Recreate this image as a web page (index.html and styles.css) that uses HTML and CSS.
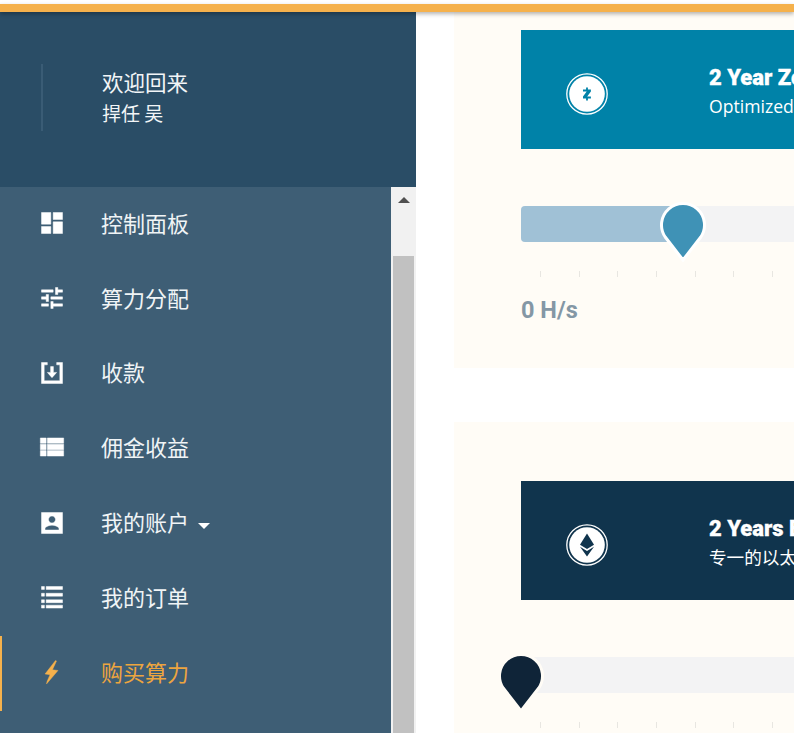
FILE: index.html
```html
<!DOCTYPE html>
<html lang="zh-CN">
<head>
    <meta charset="UTF-8">
    <title>购买算力</title>
    <link rel="stylesheet" href="styles.css">
</head>
<body>
    <div class="top-bar"></div>
    <div class="page">
        <aside class="sidebar">
            <div class="user-box">
                <div class="user-text">
                    <div class="welcome">欢迎回来</div>
                    <div class="user-name">捍任 吴</div>
                </div>
            </div>
            <div class="menu-wrap">
                <nav class="menu">
                    <a class="menu-item">
                        <svg class="icon" viewBox="0 0 24 24"><path d="M3 13h8V3H3v10zm0 8h8v-6H3v6zm10 0h8V11h-8v10zm0-18v6h8V3h-8z"/></svg>
                        <span>控制面板</span>
                    </a>
                    <a class="menu-item">
                        <svg class="icon" viewBox="0 0 24 24"><path d="M3 17v2h6v-2H3zM3 5v2h10V5H3zm10 16v-2h8v-2h-8v-2h-2v6h2zM7 9v2H3v2h4v2h2V9H7zm14 4v-2H11v2h10zm-6-4h2V7h4V5h-4V3h-2v6z"/></svg>
                        <span>算力分配</span>
                    </a>
                    <a class="menu-item">
                        <svg class="icon" viewBox="0 0 24 24"><path d="M3 3h5v2H5.300v13.700h13.400V5H16V3h5v18H3z"/><path d="M10.800 6.500h2.400v5h2.800l-4 4.500-4-4.500h2.800z"/></svg>
                        <span>收款</span>
                    </a>
                    <a class="menu-item">
                        <svg class="icon" viewBox="0 0 24 24"><path d="M2 3.400h5V8H2zM8 3.400h14V8H8zM2 8.800h5v4.600H2zM8 8.800h14v4.600H8zM2 14.200h5v4.700H2zM8 14.200h14v4.700H8z"/></svg>
                        <span>佣金收益</span>
                    </a>
                    <a class="menu-item">
                        <svg class="icon" viewBox="0 0 24 24"><path d="M3 3v18h18V3H3zm12 6c0 1.660-1.340 3-3 3s-3-1.340-3-3 1.340-3 3-3 3 1.340 3 3zm-9 8c0-2 4-3.100 6-3.100s6 1.100 6 3.100v1H6v-1z"/></svg>
                        <span>我的账户</span>
                        <i class="caret"></i>
                    </a>
                    <a class="menu-item">
                        <svg class="icon" viewBox="0 0 24 24"><path d="M3 3h2.500v2.500H3zM7 3h14v2.500H7zM3 8.800h2.500v2.500H3zM7 8.800h14v2.500H7zM3 14.400h2.500v2.500H3zM7 14.400h14v2.500H7zM3 19h2.500v2.500H3zM7 19h14v2.500H7z"/></svg>
                        <span>我的订单</span>
                    </a>
                    <a class="menu-item active">
                        <svg class="icon" viewBox="0 0 28 28"><path d="M17.500 2.500L7 16l5 .7L9 23.500l-.5 2.500L20 12.500l-5.500-.8 4-8.700z"/></svg>
                        <span>购买算力</span>
                    </a>
                </nav>
                <div class="scrollbar">
                    <div class="scroll-btn"><i class="scroll-arrow"></i></div>
                    <div class="scroll-thumb"></div>
                </div>
            </div>
        </aside>

        <main class="content">
            <section class="plan plan-first">
                <div class="plan-head head-zcash">
                    <div class="coin">
                        <svg viewBox="0 0 44 44" width="44" height="44">
                            <circle cx="22" cy="22" r="20.200" fill="none" stroke="#fff" stroke-width="1.300"/>
                            <circle cx="22" cy="22" r="17.800" fill="#fff"/>
                            <path d="M21.100 15.500h1.800v2h3v2.100l-3.700 4.900h3.700v2h-3v2h-1.800v-2h-3.100v-2l3.700-5h-3.700v-2h3.100z" fill="#0082a8"/>
                        </svg>
                    </div>
                    <div class="plan-text">
                        <div class="plan-title">2 Year Zcash Mining</div>
                        <div class="plan-sub">Optimized for Zcash mining</div>
                    </div>
                </div>
                <div class="slider">
                    <div class="track"><div class="track-fill"></div></div>
                    <svg class="pin pin-zcash" viewBox="0 0 46 64"><path d="M23 58L5.200 35A21.500 21.500 0 1 1 40.800 35z" fill="#3f92b6" stroke="#fff" stroke-width="3"/></svg>
                </div>
                <div class="ticks"><i></i><i></i><i></i><i></i><i></i><i></i><i></i></div>
                <div class="speed">0 H/s</div>
            </section>

            <section class="plan">
                <div class="plan-head head-eth">
                    <div class="coin">
                        <svg viewBox="0 0 44 44" width="44" height="44">
                            <circle cx="22" cy="22" r="20.200" fill="none" stroke="#fff" stroke-width="1.300"/>
                            <circle cx="22" cy="22" r="17.800" fill="#fff"/>
                            <path d="M22 10.500l7 11.300-7 4.200-7-4.200z" fill="#10344d"/>
                            <path d="M15 23.800l7 4.100 7-4.100-7 9.700z" fill="#10344d"/>
                        </svg>
                    </div>
                    <div class="plan-text">
                        <div class="plan-title">2 Years Ethereum Mining</div>
                        <div class="plan-sub">专一的以太坊挖矿合约</div>
                    </div>
                </div>
                <div class="slider">
                    <div class="track"></div>
                    <svg class="pin pin-eth" viewBox="0 0 46 64"><path d="M23 58L5.200 35A21.500 21.500 0 1 1 40.800 35z" fill="#0f2438" stroke="#fffcf6" stroke-width="3"/></svg>
                </div>
                <div class="ticks"><i></i><i></i><i></i><i></i><i></i><i></i><i></i></div>
            </section>
        </main>
    </div>
</body>
</html>
```

FILE: styles.css
```css
html, body {
    margin: 0;
    padding: 0;
    height: 733px;
    overflow: hidden;
    background-color: #fff;
    font-family: "Noto Sans CJK SC", "Open Sans", sans-serif;
}
.top-bar {
    position: relative;
    z-index: 2;
    height: 8px;
    margin-top: 4px;
    background-color: #f5b14c;
    box-shadow: 0 2px 4px rgba(0,0,0,0.3);
}
.page {
    display: flex;
    height: 721px;
}

/* sidebar */
.sidebar {
    flex: 0 0 416px;
    display: flex;
    flex-direction: column;
    background-color: #3e5e75;
}
.user-box {
    flex: 0 0 175px;
    box-sizing: border-box;
    padding: 52px 0 0 41px;
    background-color: #2a4d66;
}
.user-text {
    height: 67px;
    box-sizing: border-box;
    padding: 2px 0 0 59px;
    border-left: 2px solid #3a5c75;
    color: #f2f5f7;
}
.welcome {
    font-size: 21.5px;
    line-height: 32px;
}
.user-name {
    margin-top: 1px;
    font-size: 19px;
    line-height: 28px;
}
.menu-wrap {
    flex: 1;
    display: flex;
    min-height: 0;
}
.menu {
    flex: 1;
}
.menu-item {
    display: flex;
    align-items: center;
    height: 74.8px;
    box-sizing: border-box;
    padding-left: 38px;
    color: #f0f4f6;
    fill: #fff;
    stroke: #fff;
    font-size: 22px;
}
.menu-item span {
    margin-bottom: 5px;
}
.menu-item.active {
    padding-left: 36px;
    border-left: 2px solid #f5b14c;
    color: #eda53f;
    fill: #f5b14c;
    stroke: #f5b14c;
}
.icon {
    flex: 0 0 28px;
    width: 28px;
    height: 28px;
    margin: 0 35px 2px 0;
    stroke-width: 0.4;
}
.caret {
    width: 0;
    height: 0;
    margin: 4px 0 0 9px;
    border-left: 6px solid transparent;
    border-right: 6px solid transparent;
    border-top: 6px solid #fff;
}
.scrollbar {
    flex: 0 0 25px;
    background-color: #f1f1f1;
}
.scroll-btn {
    display: flex;
    justify-content: center;
    height: 69px;
    padding-top: 10px;
    box-sizing: border-box;
}
.scroll-arrow {
    width: 0;
    height: 0;
    border-left: 6px solid transparent;
    border-right: 6px solid transparent;
    border-bottom: 6px solid #505050;
}
.scroll-thumb {
    height: 480px;
    margin: 0 2px;
    background-color: #c1c1c1;
}

/* main column */
.content {
    flex: 1;
    min-width: 0;
    overflow: hidden;
    padding-left: 38px;
}
.plan {
    box-sizing: border-box;
    background-color: #fffcf6;
    padding: 59px 0 0 67px;
    margin-top: 54px;
    height: 400px;
}
.plan-first {
    margin-top: 0;
    padding-top: 18px;
    height: 356px;
}
.plan-head {
    display: flex;
    align-items: center;
    height: 119px;
    color: #fff;
    white-space: nowrap;
    overflow: hidden;
}
.head-zcash {
    background-color: #0082a8;
}
.head-eth {
    background-color: #10344d;
}
.coin {
    flex: 0 0 44px;
    height: 44px;
    margin: 9px 100px 0 44px;
}
.plan-text {
    padding-top: 2px;
}
.plan-title {
    font-family: Roboto, sans-serif;
    font-weight: 900;
    font-size: 22px;
    line-height: 30px;
    -webkit-text-stroke: 0.3px #fff;
}
.plan-sub {
    margin-top: 1px;
    font-family: "Open Sans", "Noto Sans CJK SC", sans-serif;
    font-size: 17.6px;
    line-height: 24px;
}

/* sliders */
.slider {
    position: relative;
    margin-top: 57px;
    height: 36px;
}
.track {
    height: 36px;
    background-color: #f3f3f4;
    border-radius: 4px 0 0 4px;
    overflow: hidden;
}
.track-fill {
    width: 160px;
    height: 36px;
    background-color: #a0c1d6;
}
.pin {
    position: absolute;
    top: -4.5px;
    width: 46px;
    height: 64px;
}
.pin-zcash {
    left: 139px;
}
.pin-eth {
    left: -23px;
}
.ticks {
    display: flex;
    gap: 37.67px;
    height: 6px;
    margin: 29px 0 0 19px;
}
.ticks i {
    flex: 0 0 1px;
    background-color: #e8e6e1;
}
.speed {
    margin-top: 18px;
    font-family: Roboto, sans-serif;
    font-weight: 700;
    font-size: 23.5px;
    line-height: 30px;
    color: #8497a5;
}
```
